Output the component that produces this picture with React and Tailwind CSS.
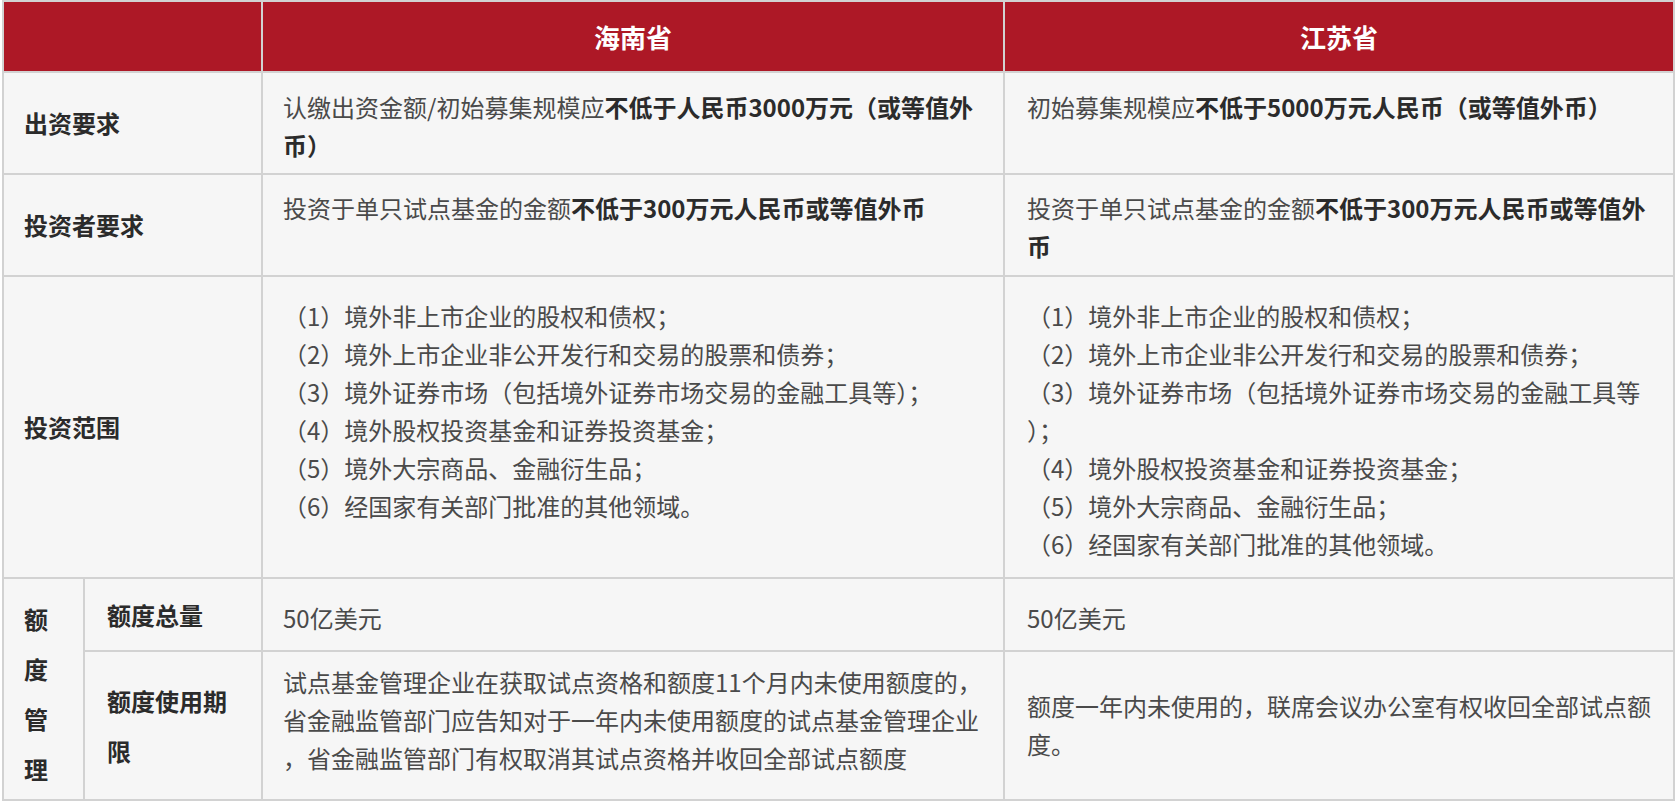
const FONT = "font-['Noto_Sans_CJK_SC','Noto_Sans',sans-serif]";

const scopeHN = [
  "（1）境外非上市企业的股权和债权；",
  "（2）境外上市企业非公开发行和交易的股票和债券；",
  "（3）境外证券市场（包括境外证券市场交易的金融工具等）；",
  "（4）境外股权投资基金和证券投资基金；",
  "（5）境外大宗商品、金融衍生品；",
  "（6）经国家有关部门批准的其他领域。",
];

const scopeJS = [
  "（1）境外非上市企业的股权和债权；",
  "（2）境外上市企业非公开发行和交易的股票和债券；",
  "（3）境外证券市场（包括境外证券市场交易的金融工具等",
  "）；",
  "（4）境外股权投资基金和证券投资基金；",
  "（5）境外大宗商品、金融衍生品；",
  "（6）经国家有关部门批准的其他领域。",
];

/* 左侧加粗标题 */
function Label({ children, className = "" }) {
  return (
    <div
      className={[
        "flex flex-col justify-center bg-[#f6f6f6] text-[24px] leading-[50px] font-bold text-[#2b2b2b]",
        className,
      ].join(" ")}
    >
      {children}
    </div>
  );
}

/* 数据单元格：逐行写出，保持原图换行位置 */
function Cell({ lines, pad, className = "" }) {
  return (
    <div
      className={[
        "bg-[#f6f6f6] text-[24px] leading-[38px] text-[#4a4a4a]",
        pad,
        className,
      ].join(" ")}
    >
      {lines.map((l, i) => (
        <div key={i} className="whitespace-nowrap">
          {l}
        </div>
      ))}
    </div>
  );
}

const B = ({ children }) => <b className="font-bold text-[#2b2b2b]">{children}</b>;

export default function App() {
  return (
    <div className={`min-h-screen bg-white pl-[2px] ${FONT}`}>
      <div className="grid w-[1673px] grid-cols-[79px_176px_740px_668px] grid-rows-[69px_100px_100px_300px_71px_147px] gap-[2px] border-2 border-[#d2d2d2] bg-[#d2d2d2]">
        {/* 表头 */}
        <div className="col-span-2 bg-[#ad1826]" />
        <div className="flex items-center justify-center bg-[#ad1826] text-[26px] font-bold text-white">
          海南省
        </div>
        <div className="flex items-center justify-center bg-[#ad1826] text-[26px] font-bold text-white">
          江苏省
        </div>

        {/* 出资要求 */}
        <Label className="col-span-2 pl-[20px]">出资要求</Label>
        <Cell
          pad="pl-[20px] pt-[15px]"
          lines={[
            <>认缴出资金额/初始募集规模应<B>不低于人民币3000万元（或等值外</B></>,
            <B>币）</B>,
          ]}
        />
        <Cell
          pad="pl-[22px] pt-[15px]"
          lines={[<>初始募集规模应<B>不低于5000万元人民币（或等值外币）</B></>]}
        />

        {/* 投资者要求 */}
        <Label className="col-span-2 pl-[20px]">投资者要求</Label>
        <Cell
          pad="pl-[20px] pt-[14px]"
          lines={[<>投资于单只试点基金的金额<B>不低于300万元人民币或等值外币</B></>]}
        />
        <Cell
          pad="pl-[22px] pt-[14px]"
          lines={[
            <>投资于单只试点基金的金额<B>不低于300万元人民币或等值外</B></>,
            <B>币</B>,
          ]}
        />

        {/* 投资范围 */}
        <Label className="col-span-2 pl-[20px]">投资范围</Label>
        <Cell pad="pl-[20px] pt-[20px]" lines={scopeHN} />
        <Cell pad="pl-[22px] pt-[20px]" lines={scopeJS} />

        {/* 额度管理 */}
        <div className="row-span-2 flex flex-col bg-[#f6f6f6] pl-[20px] pt-[15px] text-[24px] leading-[50px] font-bold text-[#2b2b2b]">
          <span>额</span>
          <span>度</span>
          <span>管</span>
          <span>理</span>
        </div>
        <Label className="pl-[22px]">额度总量</Label>
        <Cell pad="pl-[20px] pt-[20px]" lines={["50亿美元"]} />
        <Cell pad="pl-[22px] pt-[20px]" lines={["50亿美元"]} />

        <Label className="pl-[22px]">
          <span>额度使用期</span>
          <span>限</span>
        </Label>
        <Cell
          pad="pl-[20px] pt-[11px]"
          lines={[
            "试点基金管理企业在获取试点资格和额度11个月内未使用额度的，",
            "省金融监管部门应告知对于一年内未使用额度的试点基金管理企业",
            "，省金融监管部门有权取消其试点资格并收回全部试点额度",
          ]}
        />
        <Cell
          pad="pl-[22px] pt-[35px]"
          lines={["额度一年内未使用的，联席会议办公室有权收回全部试点额", "度。"]}
        />
      </div>
    </div>
  );
}
